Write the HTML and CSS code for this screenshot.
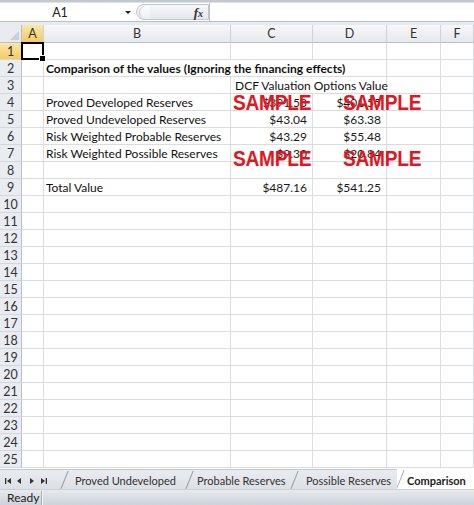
FILE: index.html
```html
<!DOCTYPE html>
<html>
<head>
<meta charset="utf-8">
<link rel="stylesheet" href="styles.css">
</head>
<body>
<div class="app">
  <div class="ribbon-edge"></div>
  <div class="fbar">
    <div class="namebox"><span class="ref">A1</span><span class="dd"></span></div>
    <div class="fx-area"><span class="expander"></span><span class="fx">f<span class="fx-x">x</span></span></div>
    <div class="finput"></div>
  </div>
  <div class="gap"></div>
  <div class="sheet">
    <div class="row hdr">
      <div class="corner"></div>
      <div class="ch wa selh">A</div>
      <div class="ch wb">B</div>
      <div class="ch wc">C</div>
      <div class="ch wd">D</div>
      <div class="ch we">E</div>
      <div class="ch wf">F</div>
    </div>
    <div class="row"><div class="rh selh">1</div><div class="c wa a1"></div><div class="c wb"></div><div class="c wc"></div><div class="c wd"></div><div class="c we"></div><div class="c wf"></div></div>
    <div class="row"><div class="rh">2</div><div class="c wa"></div><div class="c wbcd bold">Comparison of the values (Ignoring the financing effects)</div><div class="c we"></div><div class="c wf"></div></div>
    <div class="row"><div class="rh">3</div><div class="c wa"></div><div class="c wb"></div><div class="c wcd ind">DCF Valuation Options Value</div><div class="c we"></div><div class="c wf"></div></div>
    <div class="row"><div class="rh">4</div><div class="c wa"></div><div class="c wb">Proved Developed Reserves</div><div class="c wc num">$391.53</div><div class="c wd num">$401.55</div><div class="c we"></div><div class="c wf"></div></div>
    <div class="row"><div class="rh">5</div><div class="c wa"></div><div class="c wb">Proved Undeveloped Reserves</div><div class="c wc num">$43.04</div><div class="c wd num">$63.38</div><div class="c we"></div><div class="c wf"></div></div>
    <div class="row"><div class="rh">6</div><div class="c wa"></div><div class="c wb">Risk Weighted Probable Reserves</div><div class="c wc num">$43.29</div><div class="c wd num">$55.48</div><div class="c we"></div><div class="c wf"></div></div>
    <div class="row"><div class="rh">7</div><div class="c wa"></div><div class="c wb">Risk Weighted Possible Reserves</div><div class="c wc num">$9.30</div><div class="c wd num">$20.84</div><div class="c we"></div><div class="c wf"></div></div>
    <div class="row"><div class="rh">8</div><div class="c wa"></div><div class="c wb"></div><div class="c wc"></div><div class="c wd"></div><div class="c we"></div><div class="c wf"></div></div>
    <div class="row"><div class="rh">9</div><div class="c wa"></div><div class="c wb">Total Value</div><div class="c wc num">$487.16</div><div class="c wd num">$541.25</div><div class="c we"></div><div class="c wf"></div></div>
    <div class="row"><div class="rh">10</div><div class="c wa"></div><div class="c wb"></div><div class="c wc"></div><div class="c wd"></div><div class="c we"></div><div class="c wf"></div></div>
    <div class="row"><div class="rh">11</div><div class="c wa"></div><div class="c wb"></div><div class="c wc"></div><div class="c wd"></div><div class="c we"></div><div class="c wf"></div></div>
    <div class="row"><div class="rh">12</div><div class="c wa"></div><div class="c wb"></div><div class="c wc"></div><div class="c wd"></div><div class="c we"></div><div class="c wf"></div></div>
    <div class="row"><div class="rh">13</div><div class="c wa"></div><div class="c wb"></div><div class="c wc"></div><div class="c wd"></div><div class="c we"></div><div class="c wf"></div></div>
    <div class="row"><div class="rh">14</div><div class="c wa"></div><div class="c wb"></div><div class="c wc"></div><div class="c wd"></div><div class="c we"></div><div class="c wf"></div></div>
    <div class="row"><div class="rh">15</div><div class="c wa"></div><div class="c wb"></div><div class="c wc"></div><div class="c wd"></div><div class="c we"></div><div class="c wf"></div></div>
    <div class="row"><div class="rh">16</div><div class="c wa"></div><div class="c wb"></div><div class="c wc"></div><div class="c wd"></div><div class="c we"></div><div class="c wf"></div></div>
    <div class="row"><div class="rh">17</div><div class="c wa"></div><div class="c wb"></div><div class="c wc"></div><div class="c wd"></div><div class="c we"></div><div class="c wf"></div></div>
    <div class="row"><div class="rh">18</div><div class="c wa"></div><div class="c wb"></div><div class="c wc"></div><div class="c wd"></div><div class="c we"></div><div class="c wf"></div></div>
    <div class="row"><div class="rh">19</div><div class="c wa"></div><div class="c wb"></div><div class="c wc"></div><div class="c wd"></div><div class="c we"></div><div class="c wf"></div></div>
    <div class="row"><div class="rh">20</div><div class="c wa"></div><div class="c wb"></div><div class="c wc"></div><div class="c wd"></div><div class="c we"></div><div class="c wf"></div></div>
    <div class="row"><div class="rh">21</div><div class="c wa"></div><div class="c wb"></div><div class="c wc"></div><div class="c wd"></div><div class="c we"></div><div class="c wf"></div></div>
    <div class="row"><div class="rh">22</div><div class="c wa"></div><div class="c wb"></div><div class="c wc"></div><div class="c wd"></div><div class="c we"></div><div class="c wf"></div></div>
    <div class="row"><div class="rh">23</div><div class="c wa"></div><div class="c wb"></div><div class="c wc"></div><div class="c wd"></div><div class="c we"></div><div class="c wf"></div></div>
    <div class="row"><div class="rh">24</div><div class="c wa"></div><div class="c wb"></div><div class="c wc"></div><div class="c wd"></div><div class="c we"></div><div class="c wf"></div></div>
    <div class="row"><div class="rh">25</div><div class="c wa"></div><div class="c wb"></div><div class="c wc"></div><div class="c wd"></div><div class="c we"></div><div class="c wf"></div></div>
    <div class="wm wm1">SAMPLE</div>
    <div class="wm wm2">SAMPLE</div>
    <div class="wm wm3">SAMPLE</div>
    <div class="wm wm4">SAMPLE</div>
  </div>
  <div class="tabbar">
    <div class="nav">
      <svg width="50" height="18" viewBox="0 0 50 18">
        <rect x="5" y="8" width="1.3" height="6" fill="#333"/>
        <polygon points="7,11 11,8 11,14" fill="#333"/>
        <polygon points="17,11 21,8 21,14" fill="#333"/>
        <polygon points="34,11 30,8 30,14" fill="#333"/>
        <polygon points="45,11 41,8 41,14" fill="#333"/>
        <rect x="45.7" y="8" width="1.3" height="6" fill="#333"/>
      </svg>
    </div>
    <div class="tab t1">Proved Undeveloped</div>
    <div class="tab t2">Probable Reserves</div>
    <div class="tab t3">Possible Reserves</div>
    <div class="tab active">Comparison</div>
  </div>
  <div class="status"><span class="ready">Ready</span><span class="sdiv"></span></div>
</div>
</body>
</html>
```
FILE: styles.css
```css
* { box-sizing: border-box; }
html, body { margin: 0; padding: 0; }
body { width: 474px; height: 505px; overflow: hidden; background: #fff; font-family: Lato, "Open Sans", sans-serif; font-size: 12px; color: #111; }
.app { width: 474px; height: 505px; display: flex; flex-direction: column; overflow: hidden; }

.ribbon-edge { height: 3px; background: #c2c8d0; border-bottom: 1px solid #dfe3e8; }
.fbar { height: 19px; display: flex; background: #fff; border-bottom: 1px solid #b9c0c9; }
.namebox { width: 136px; position: relative; display: flex; align-items: center; justify-content: center; padding-right: 16px; font-size: 12.5px; color: #222; }
.dd { position: absolute; right: 5px; top: 8px; width: 0; height: 0; border-left: 3px solid transparent; border-right: 3px solid transparent; border-top: 3px solid #222; }
.fx-area { width: 73px; margin: 1px 0 1px 0; border: 1px solid #c3c9d1; border-radius: 9px 0 0 9px; background: linear-gradient(#f6f7f9, #e4e7eb); display: flex; align-items: center; justify-content: space-between; padding: 0 5px 0 2px; }
.expander { width: 11px; height: 13px; border-radius: 7px 0 0 7px; border-left: 1px solid #c5cbd2; background: linear-gradient(#fbfcfd, #eceef1); }
.fx { font-family: "Liberation Serif", serif; font-style: italic; font-weight: bold; font-size: 13px; color: #333; line-height: 1; }
.fx-x { font-size: 10px; }
.finput { flex: 1; border-left: 1px solid #b9c0c9; }
.gap { height: 3px; background: #e7eaee; }

.sheet { position: relative; flex: none; }
.row { display: flex; height: 17px; }
.row.hdr { height: 18px; }
.corner { width: 22px; background: #e8ebef; border-right: 1px solid #b9c0c9; border-bottom: 1px solid #b9c0c9; position: relative; }
.corner::after { content: ""; position: absolute; right: 2px; bottom: 2px; width: 0; height: 0; border-left: 9px solid transparent; border-bottom: 9px solid #cbd0d6; }
.ch { background: linear-gradient(#f6f7f9, #e6e9ed); border-right: 1px solid #cdd2d8; border-bottom: 1px solid #b9c0c9; text-align: center; line-height: 18px; color: #333; font-size: 12.5px; }
.rh { width: 22px; background: #e9ecf0; border-right: 1px solid #b9c0c9; border-bottom: 1px solid #d3d8de; text-align: center; padding-top: 1px; line-height: 16px; color: #333; font-size: 12.5px; }
.selh { background: linear-gradient(#fbe6a9, #f4cb64); color: #333; }
.c { border-right: 1px solid #dadcdf; border-bottom: 1px solid #dadcdf; padding: 1px 2px 0 2px; line-height: 16px; white-space: nowrap; overflow: visible; }
.wa { width: 22px; }
.wb { width: 187px; }
.wc { width: 82px; }
.wd { width: 74px; }
.we { width: 54px; }
.wf { width: 33px; }
.wbcd { width: 343px; }
.wcd { width: 156px; }
.bold { font-weight: bold; }
.ind { padding-left: 4px; }
.num { text-align: right; padding-right: 5px; color: #1a1a1a; }
.a1 { position: relative; }
.a1::after { content: ""; position: absolute; left: -1px; top: -1px; right: -1px; bottom: -1px; border: 2px solid #000; }
.a1::before { content: ""; position: absolute; right: -3px; bottom: -3px; width: 5px; height: 5px; background: #000; border: 1px solid #fff; z-index: 2; }

.wm { position: absolute; font-family: "Liberation Sans", Arial, sans-serif; font-weight: bold; font-size: 22px; line-height: 22px; color: #e3161f; transform: scaleX(0.87); transform-origin: left top; letter-spacing: -0.3px; }
.wm1 { left: 233px; top: 67px; }
.wm2 { left: 343px; top: 67px; }
.wm3 { left: 233px; top: 123px; }
.wm4 { left: 343px; top: 123px; }

.tabbar { height: 20px; margin-top: 1px; display: flex; background: linear-gradient(#e9ecef, #dcdfe4); border-top: 1px solid #c3c8cf; font-size: 11px; color: #333; white-space: nowrap; }
.nav { width: 58px; flex: none; display: flex; align-items: flex-start; }
.tab { position: relative; padding-top: 3px; line-height: 15px; flex: none; overflow: hidden; }
.tab::before { content: ""; position: absolute; left: 6px; top: 1px; width: 1px; height: 18px; background: #8f98a4; transform: skewX(-22deg); }
.t1 { width: 125px; padding-left: 17px; }
.t2 { width: 105px; padding-left: 14px; }
.t3 { width: 109px; padding-left: 18px; }
.tab.active { flex: 1; background: #fff; font-weight: bold; color: #222; margin-top: -1px; padding-top: 4px; padding-left: 10px; }
.tab.active::before { left: 3px; background: #a3abb6; }
.status { height: 16px; display: flex; align-items: center; background: linear-gradient(#e7eaee, #cdd3da); border-top: 1px solid #c9cfd7; font-size: 12px; color: #222; }
.ready { padding-left: 7px; width: 41px; }
.sdiv { width: 1px; height: 14px; background: #a8b0ba; box-shadow: 1px 0 0 #f3f5f7; }
```
